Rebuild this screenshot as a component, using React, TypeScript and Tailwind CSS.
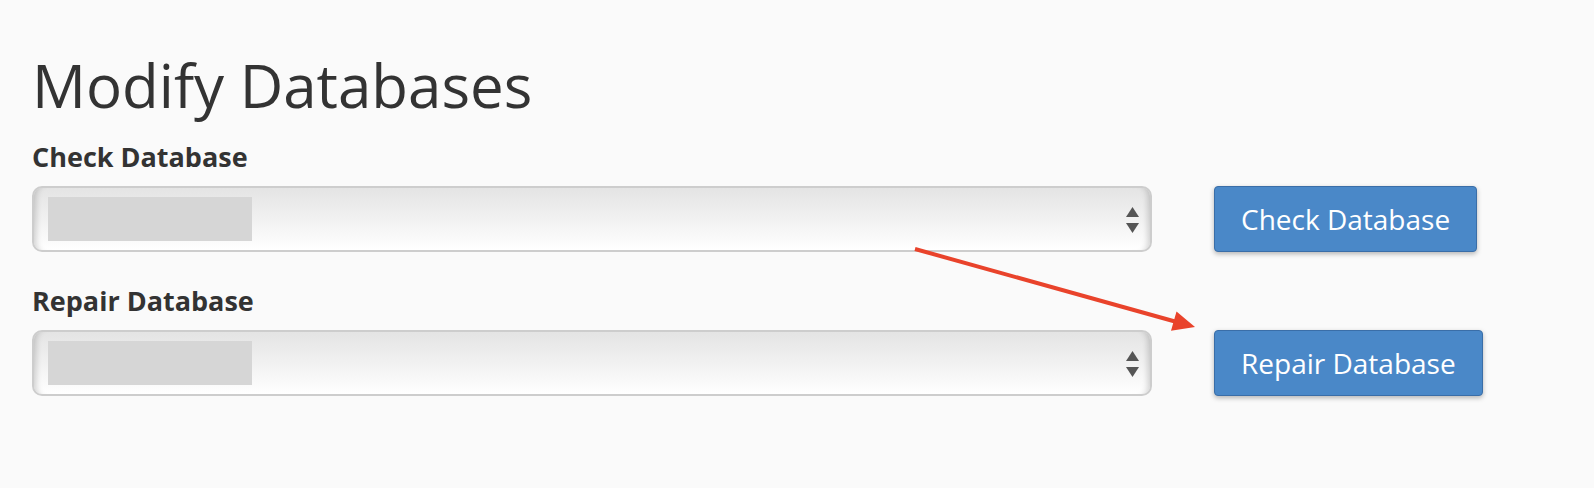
import React from 'react'

function SelectBox() {
  return (
    <div className="relative flex h-[66px] w-[1120px] items-center rounded-[10px] border-2 border-[#cdcdcd] bg-gradient-to-b from-[#e4e4e4] via-[#f1f1f1] to-white shadow-[inset_8px_0_6px_-6px_rgba(0,0,0,0.18),inset_-8px_0_6px_-6px_rgba(0,0,0,0.18)]">
      <div className="ml-[14px] h-[44px] w-[204px] bg-[#d6d6d6]" />
      <svg className="absolute right-[11px] top-[19px]" width="13" height="26" viewBox="0 0 13 26">
        <polygon points="6.5,0 13,10 0,10" fill="#555" />
        <polygon points="0,16 13,16 6.5,26" fill="#555" />
      </svg>
    </div>
  )
}

function ActionButton({ label }: { label: string }) {
  return (
    <button className="h-[66px] rounded-[4px] border border-[#3a6ea8] bg-[#4a88c8] px-[26px] text-[28px] leading-[64px] text-white shadow-[0_2px_5px_rgba(0,0,0,0.28)]">
      {label}
    </button>
  )
}

export default function App() {
  return (
    <div
      className="relative min-h-[488px] w-full bg-[#fafafa] text-[#333]"
      style={{ fontFamily: '"Open Sans", "Noto Sans", sans-serif' }}
    >
      <div className="pl-[32px] pt-[52px]">
        <h1 className="text-[60px] leading-[66px] font-normal">Modify Databases</h1>

        {/* Check */}
        <div className="mt-[21px]">
          <label className="block text-[27px] leading-[36px] font-bold">Check Database</label>
          <div className="mt-[11px] flex items-start gap-[62px]">
            <SelectBox />
            <ActionButton label="Check Database" />
          </div>
        </div>

        {/* Repair */}
        <div className="mt-[31px]">
          <label className="block text-[27px] leading-[36px] font-bold">Repair Database</label>
          <div className="mt-[11px] flex items-start gap-[62px]">
            <SelectBox />
            <ActionButton label="Repair Database" />
          </div>
        </div>
      </div>

      {/* annotation arrow */}
      <svg className="pointer-events-none absolute inset-0 h-full w-full">
        <line x1="915" y1="249" x2="1175" y2="321.5" stroke="#e9432b" strokeWidth="4" />
        <polygon points="1195,327 1171,330.7 1176.5,311.5" fill="#e9432b" />
      </svg>
    </div>
  )
}
